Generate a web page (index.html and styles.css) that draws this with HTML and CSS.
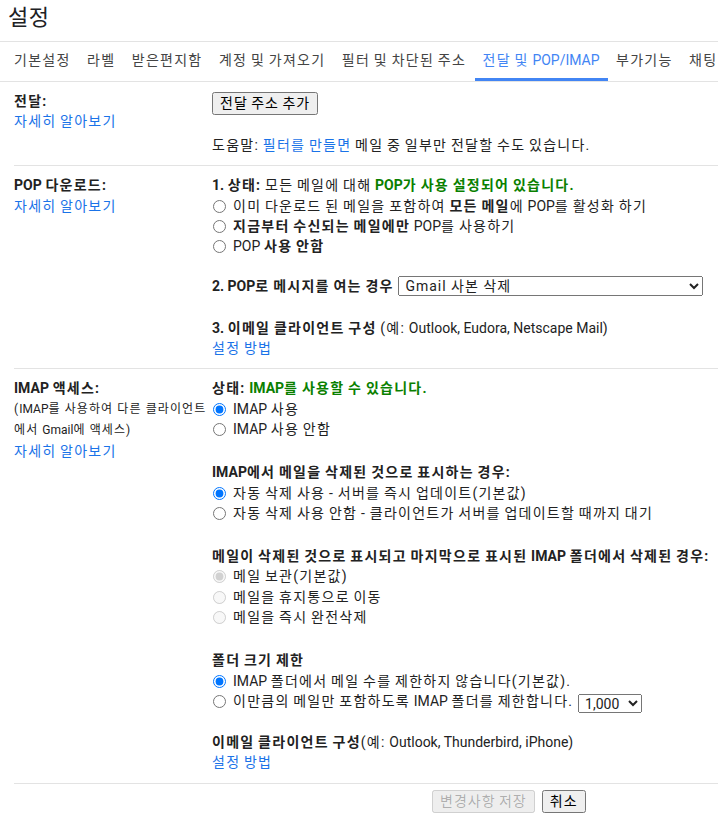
FILE: index.html
```html
<!DOCTYPE html>
<html lang="ko">
<head>
  <meta charset="utf-8">
  <title>설정</title>
  <link rel="stylesheet" href="styles.css">
</head>
<body>
  <h1 class="title">설정</h1>
  <nav class="tabs">
    <a class="tab">기본설정</a>
    <a class="tab">라벨</a>
    <a class="tab">받은편지함</a>
    <a class="tab">계정 및 가져오기</a>
    <a class="tab">필터 및 차단된 주소</a>
    <a class="tab active">전달 및 <span class="en">POP/IMAP</span></a>
    <a class="tab">부가기능</a>
    <a class="tab">채팅 및 <span class="en">Meet</span></a>
  </nav>

  <div class="section">
    <div class="side">
      <div class="side-title">전달:</div>
      <a class="link">자세히 알아보기</a>
    </div>
    <div class="main">
      <button class="btn btn-top">전달 주소 추가</button>
      <div class="group gap-help">도움말: <a class="link-inline">필터를 만들면</a> 메일 중 일부만 전달할 수도 있습니다.</div>
    </div>
  </div>

  <div class="section">
    <div class="side">
      <div class="side-title"><span class="en">POP</span> 다운로드:</div>
      <a class="link">자세히 알아보기</a>
    </div>
    <div class="main">
      <div class="group">
        <div class="line"><b><span class="en">1.</span> 상태:</b> 모든 메일에 대해 <b class="ok"><span class="en">POP</span>가 사용 설정되어 있습니다.</b></div>
        <label class="line"><input type="radio" name="pop">이미 다운로드 된 메일을 포함하여 <b>모든 메일</b>에 <span class="en">POP</span>를 활성화 하기</label>
        <label class="line"><input type="radio" name="pop"><b>지금부터 수신되는 메일에만</b> <span class="en">POP</span>를 사용하기</label>
        <label class="line"><input type="radio" name="pop"><span class="en">POP</span> <b>사용 안함</b></label>
      </div>
      <div class="group gap-pop2">
        <div class="line"><b><span class="en">2. POP</span>로 메시지를 여는 경우</b>
          <select class="select wide">
            <option>Gmail 사본 삭제</option>
          </select>
        </div>
      </div>
      <div class="group gap-pop3">
        <div class="line"><b><span class="en">3.</span> 이메일 클라이언트 구성</b> (예: <span class="en">Outlook, Eudora, Netscape Mail)</span></div>
        <a class="link">설정 방법</a>
      </div>
    </div>
  </div>

  <div class="section">
    <div class="side">
      <div class="side-title"><span class="en">IMAP</span> 액세스:</div>
      <div class="side-note">(<span class="en">IMAP</span>를 사용하여 다른 클라이언트</div>
      <div class="side-note">에서 <span class="en">Gmail</span>에 액세스)</div>
      <a class="link">자세히 알아보기</a>
    </div>
    <div class="main">
      <div class="group">
        <div class="line"><b>상태: <span class="ok"><span class="en">IMAP</span>를 사용할 수 있습니다.</span></b></div>
        <label class="line"><input type="radio" name="imap" checked><span class="en">IMAP</span> 사용</label>
        <label class="line"><input type="radio" name="imap"><span class="en">IMAP</span> 사용 안함</label>
      </div>
      <div class="group gap-imap">
        <div class="line"><b><span class="en">IMAP</span>에서 메일을 삭제된 것으로 표시하는 경우:</b></div>
        <label class="line"><input type="radio" name="expunge" checked>자동 삭제 사용 - 서버를 즉시 업데이트(기본값)</label>
        <label class="line"><input type="radio" name="expunge">자동 삭제 사용 안함 - 클라이언트가 서버를 업데이트할 때까지 대기</label>
      </div>
      <div class="group gap-imap">
        <div class="line"><b>메일이 삭제된 것으로 표시되고 마지막으로 표시된 <span class="en">IMAP</span> 폴더에서 삭제된 경우:</b></div>
        <label class="line"><input type="radio" name="del" checked disabled>메일 보관(기본값)</label>
        <label class="line"><input type="radio" name="del" disabled>메일을 휴지통으로 이동</label>
        <label class="line"><input type="radio" name="del" disabled>메일을 즉시 완전삭제</label>
      </div>
      <div class="group gap-imap">
        <div class="line"><b>폴더 크기 제한</b></div>
        <label class="line"><input type="radio" name="limit" checked><span class="en">IMAP</span> 폴더에서 메일 수를 제한하지 않습니다(기본값).</label>
        <label class="line"><input type="radio" name="limit">이만큼의 메일만 포함하도록 <span class="en">IMAP</span> 폴더를 제한합니다.
          <select class="select small">
            <option>1,000</option>
          </select>
        </label>
      </div>
      <div class="group gap-client">
        <div class="line"><b>이메일 클라이언트 구성</b>(예: <span class="en">Outlook, Thunderbird, iPhone)</span></div>
        <a class="link">설정 방법</a>
      </div>
    </div>
  </div>

  <div class="actions">
    <button class="btn" disabled>변경사항 저장</button>
    <button class="btn">취소</button>
  </div>
</body>
</html>
```

FILE: styles.css
```css
* { box-sizing: border-box; }
body {
  margin: 0;
  font-family: Roboto, "Noto Sans CJK KR", sans-serif;
  font-size: 14px;
  line-height: 20.3px;
  letter-spacing: 1.25px;
  word-spacing: -1px;
  color: #222;
  background: #fff;
  overflow: hidden;
}
.en { letter-spacing: 0; word-spacing: 0; }
.title {
  margin: 0;
  height: 41px;
  padding-left: 8px;
  font-size: 22px;
  font-weight: normal;
  line-height: 36px;
  letter-spacing: 0.5px;
  color: #202124;
}
.tabs {
  display: flex;
  gap: 0.5px;
  height: 41px;
  padding-left: 6px;
  border-top: 1px solid #e3e3e3;
  border-bottom: 1px solid #e3e3e3;
  white-space: nowrap;
  overflow: hidden;
}
.tab {
  flex: none;
  padding: 0 8px;
  line-height: 37px;
  color: #444;
  border-bottom: 3px solid transparent;
}
.tab.active {
  color: #4285f4;
  border-bottom-color: #4285f4;
}
.section {
  display: grid;
  grid-template-columns: 198px 1fr;
  margin-left: 14px;
  padding: 9px 0 10px;
  border-bottom: 1px solid #e3e3e3;
}
b, .side-title { font-weight: bold; }
.side-note {
  font-size: 12px;
  line-height: 21px;
  letter-spacing: 1.1px;
  word-spacing: 0;
  white-space: nowrap;
}
.link {
  display: block;
  width: max-content;
  color: #1a73e8;
  text-decoration: none;
}
.link-inline {
  color: #1a73e8;
  text-decoration: none;
}
.line { display: block; white-space: nowrap; }
.ok { color: #0a8000; }
input[type=radio] {
  width: 13px;
  height: 13px;
  margin: 0 7px 0 1px;
  vertical-align: -2px;
}
.gap-help { margin-top: 20px; }
.gap-pop2 { margin-top: 20px; }
.gap-pop3 { margin-top: 21px; }
.gap-imap { margin-top: 23px; }
.gap-client { margin-top: 19px; }
.btn {
  font-family: Roboto, "Noto Sans CJK KR", sans-serif;
  font-size: 14px;
  letter-spacing: 1px;
  word-spacing: -1px;
  height: 23px;
  padding: 0 6px;
  line-height: 19px;
}
.btn-top { display: block; margin-top: 1px; }
.select {
  font-family: Roboto, "Noto Sans CJK KR", sans-serif;
  font-size: 14px;
  letter-spacing: 1px;
  height: 20px;
  padding: 0 2px;
  color: #222;
  vertical-align: top;
}
.select.wide { width: 305px; margin-left: 1px; }
.select.small { width: 64px; height: 19px; letter-spacing: 0; vertical-align: -3px; margin-left: 1px; }
.actions {
  display: flex;
  gap: 7px;
  padding: 6px 0 0 432px;
}
```
